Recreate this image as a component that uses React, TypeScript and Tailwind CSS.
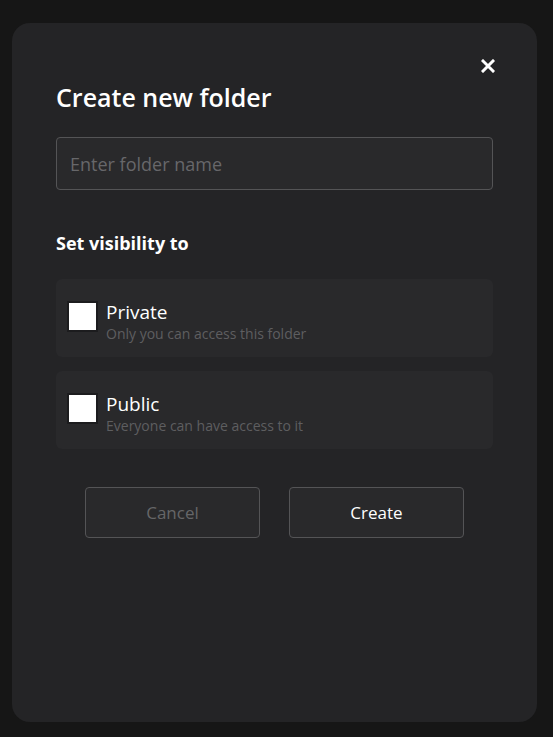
import React, { useState } from 'react';

const font = { fontFamily: '"Open Sans", Lato, sans-serif' };

interface OptionProps {
  label: string;
  hint: string;
  checked: boolean;
  onToggle: () => void;
}

const VisibilityOption: React.FC<OptionProps> = ({ label, hint, checked, onToggle }) => (
  <label className="flex items-start h-[78px] rounded-md bg-[#29292b] pl-[11px] pt-[22px] cursor-pointer">
    <span
      onClick={onToggle}
      className="w-[31px] h-[31px] bg-white border-2 border-[#1c1c1e] shrink-0 flex items-center justify-center"
    >
      {checked && <span className="w-3 h-3 bg-[#242426]" />}
    </span>
    <span className="ml-[8px] flex flex-col">
      <span className="text-[19px] leading-[22px] text-white">{label}</span>
      <span className="text-[14px] leading-[20px] mt-[1px] text-[#5e5e60]">{hint}</span>
    </span>
  </label>
);

export default function App() {
  const [visibility, setVisibility] = useState<string | null>(null);

  return (
    <div className="min-h-[737px] bg-[#161616] pt-[23px] pl-[12px]" style={font}>
      <div className="w-[525px] h-[699px] rounded-[18px] bg-[#242426] px-[44px] pt-[36px]">
        {/* Close */}
        <div className="flex justify-end mr-[-2px]">
          <button className="text-white">
            <svg width="14" height="14" viewBox="0 0 14 14">
              <path d="M2 2 L12 12 M12 2 L2 12" stroke="white" strokeWidth="3" strokeLinecap="square" />
            </svg>
          </button>
        </div>

        <h2 className="mt-[8px] text-[25px] leading-[32px] font-semibold text-white">Create new folder</h2>

        <input
          placeholder="Enter folder name"
          className="mt-[24px] w-full h-[53px] rounded-[4px] border border-[#545456] bg-[#29292b] px-[13px] text-[18px] text-white placeholder:text-[#67676a] outline-none"
        />

        <h3 className="mt-[41px] text-[18px] leading-[24px] font-bold text-white">Set visibility to</h3>

        <div className="mt-[24px] flex flex-col gap-[14px]">
          <VisibilityOption
            label="Private"
            hint="Only you can access this folder"
            checked={visibility === 'private'}
            onToggle={() => setVisibility('private')}
          />
          <VisibilityOption
            label="Public"
            hint="Everyone can have access to it"
            checked={visibility === 'public'}
            onToggle={() => setVisibility('public')}
          />
        </div>

        <div className="mt-[38px] flex justify-center gap-[29px]">
          <button className="w-[175px] h-[51px] rounded-[4px] border border-[#545456] bg-[#29292b] text-[17px] text-[#666668]">
            Cancel
          </button>
          <button className="w-[175px] h-[51px] rounded-[4px] border border-[#545456] bg-[#29292b] text-[17px] text-white">
            Create
          </button>
        </div>
      </div>
    </div>
  );
}
